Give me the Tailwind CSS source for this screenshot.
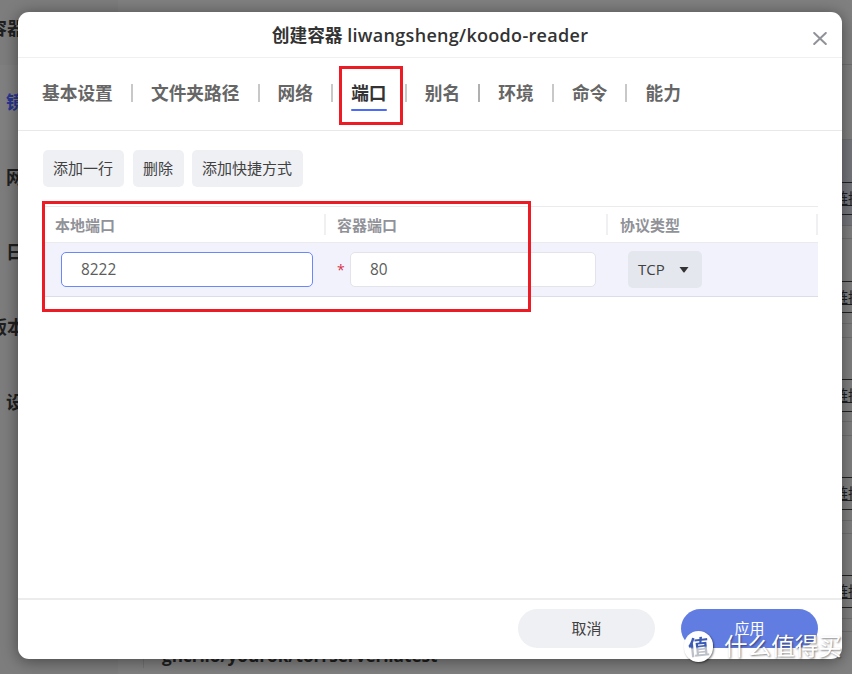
<!DOCTYPE html>
<html lang="zh-CN">
<head>
  <meta charset="UTF-8">
  <meta name="viewport" content="width=device-width, initial-scale=1.0">
  <title>创建容器</title>
  <script src="https://cdn.jsdelivr.net/npm/@tailwindcss/browser@4"></script>
</head>
<body class="relative w-[852px] h-[674px] overflow-hidden bg-[#808080] font-['Open_Sans','Noto_Sans_CJK_SC',sans-serif]">
  <!-- 背景页面 -->
  <div class="flex h-[674px] text-[#1f1f1f]">
    <nav class="w-[118px] shrink-0 bg-[#7d7d7d] text-[18px] font-bold whitespace-nowrap">
      <div class="h-[65px] pt-[10px] -ml-[11px] leading-9">容器</div>
      <div class="h-[75px] pl-[6px] leading-[75px] bg-[#808080] text-[#2a3590]">镜像</div>
      <div class="h-[75px] pl-[6px] leading-[75px]">网络</div>
      <div class="h-[75px] pl-[6px] leading-[75px]">日志</div>
      <div class="h-[75px] -ml-[11px] leading-[75px]">版本</div>
      <div class="h-[75px] pl-[6px] leading-[75px]">设置</div>
    </nav>
    <main class="flex flex-1 min-w-0">
      <div class="w-[26px] shrink-0 flex items-end justify-end">
        <div class="w-px h-[56px] mb-[6px] bg-[#747474]"></div>
      </div>
      <div class="flex-1 flex items-end pb-[6px] pl-[18px] text-[17.2px] leading-6 font-bold whitespace-nowrap">ghcr.io/yourok/torrserver:latest</div>
      <div class="w-[18px] shrink-0 text-[15px] whitespace-nowrap overflow-hidden pt-[64px]">
        <div class="h-[76px] border-y border-[#707070]"></div>
        <div class="h-[86px] pt-[42px] bg-[#75767d] border-b border-[#6c6c6c]">
          <div class="h-[33px] leading-[31px] border-y border-[#222]"><span class="-ml-[1px] underline">链接</span></div>
        </div>
        <div class="h-[98px] pt-[12px] border-b border-[#707070]">
          <div class="h-[43px] border-t border-[#707070]"></div>
          <div class="h-[32px] leading-[30px] border-y border-[#222]"><span class="-ml-[1px] underline">链接</span></div>
        </div>
        <div class="h-[98px] pt-[13px] border-b border-[#707070]">
          <div class="h-[42px] border-t border-[#707070]"></div>
          <div class="h-[33px] leading-[31px] border-y border-[#222]"><span class="-ml-[1px] underline">链接</span></div>
        </div>
        <div class="h-[99px] pt-[13px] border-b border-[#707070]">
          <div class="h-[42px] border-t border-[#707070]"></div>
          <div class="h-[33px] leading-[31px] border-y border-[#222]"><span class="-ml-[1px] underline">链接</span></div>
        </div>
        <div class="h-[98px] pt-[12px] border-b border-[#707070]">
          <div class="h-[42px] border-t border-[#707070]"></div>
          <div class="h-[33px] leading-[31px] border-y border-[#222]"><span class="-ml-[1px] underline">链接</span></div>
        </div>
        <div class="h-[13px] border-b border-[#707070]"></div>
      </div>
    </main>
  </div>

  <!-- 创建容器弹窗 -->
  <div class="absolute left-[18px] top-[12px] w-[824px] h-[647px] flex flex-col rounded-[11px] bg-white shadow-[0_2px_16px_rgba(0,0,0,0.45)]">
    <header class="flex h-[46px] shrink-0 items-center justify-center border-b border-[#f0f0f0]">
      <h1 class="pt-[2px] text-[18px] font-semibold text-[#333] whitespace-nowrap"><span class="text-[17.7px] font-bold">创建容器</span> <span class="tracking-[0.3px]">liwangsheng/koodo-reader</span></h1>
      <button class="absolute right-[15px] top-[20px]" aria-label="关闭">
        <svg class="w-[14px] h-[13px]" fill="none" stroke="#909298" stroke-width="2" stroke-linecap="round" viewBox="0 0 14 13">
          <path d="M1.2 1L12.8 12M12.8 1L1.2 12"/>
        </svg>
      </button>
    </header>

    <!-- 标签栏 -->
    <nav class="flex h-[73px] shrink-0 items-center gap-[18.1px] pl-[24px] pb-[2px] border-b border-[#e8e8ea] text-[17.7px] font-bold text-[#666] whitespace-nowrap">
      <span>基本设置</span>
      <i class="w-[2px] h-[18px] bg-[#c8c8c8]"></i>
      <span>文件夹路径</span>
      <i class="w-[2px] h-[18px] bg-[#c8c8c8]"></i>
      <span>网络</span>
      <i class="w-[2px] h-[18px] bg-[#c8c8c8]"></i>
      <span class="relative text-[#333]">端口<b class="absolute left-0 -bottom-[5px] w-full h-[2px] rounded bg-[#4b6bfb]"></b></span>
      <i class="w-[2px] h-[18px] bg-[#c8c8c8]"></i>
      <span>别名</span>
      <i class="w-[2px] h-[18px] bg-[#b0b0b0]"></i>
      <span>环境</span>
      <i class="w-[2px] h-[18px] bg-[#c8c8c8]"></i>
      <span>命令</span>
      <i class="w-[2px] h-[18px] bg-[#c8c8c8]"></i>
      <span>能力</span>
    </nav>

    <section class="flex-1 px-[25px] pt-[19px] text-[15px] text-[#414141]">
      <div class="flex whitespace-nowrap">
        <button class="w-[81px] h-[37px] pr-px rounded-[5px] bg-[#eff0f4]">添加一行</button>
        <button class="w-[51px] h-[37px] ml-[9px] pr-px rounded-[5px] bg-[#eff0f4]">删除</button>
        <button class="w-[111px] h-[37px] ml-[8px] pr-px rounded-[5px] bg-[#eff0f4]">添加快捷方式</button>
      </div>

      <!-- 端口表格 -->
      <div class="mt-[19px] w-[775px] border-t border-[#ebebed]">
        <div class="flex h-[36px] items-center border-b border-[#ebebed] font-bold text-[#909298]">
          <div class="flex items-center w-[283px] h-[21px] pt-[2px] pl-[12px] border-r-2 border-[#f0f0f2]">本地端口</div>
          <div class="flex items-center w-[282px] h-[21px] pt-[2px] pl-[11px] border-r-2 border-[#f0f0f2]">容器端口</div>
          <div class="flex items-center w-[210px] h-[21px] pt-[2px] pl-[12px] border-r-2 border-[#f0f0f2]">协议类型</div>
        </div>
        <div class="flex h-[54px] items-center bg-[#f1f2fb] border-b border-[#dcdee6] text-[#5c5c5c]">
          <div class="w-[282px] pl-[18px]">
            <div class="w-[252px] h-[35px] pl-[19px] text-[15.4px] leading-[33px] rounded-[5px] border border-[#6b87f8] bg-white">8222</div>
          </div>
          <div class="flex w-[282px] items-center pl-[12px]">
            <span class="w-[13px] text-[14px] text-[#d8344c]">*</span>
            <div class="w-[246px] h-[35px] pl-[19px] text-[15.4px] leading-[33px] rounded-[5px] border border-[#e2e4ea] bg-white">80</div>
          </div>
          <div class="pl-[21px]">
            <button class="flex w-[74px] h-[37px] items-center pl-[10px] pb-[1px] rounded-[5px] bg-[#e4e7ee] text-[#414141]">TCP
              <svg class="w-[10px] h-[6px] ml-[14px] mt-[2px]" viewBox="0 0 10 6" fill="#333"><path d="M0.5 0h9L5.6 5.2q-.6.6-1.2 0z"/></svg>
            </button>
          </div>
        </div>
      </div>
    </section>

    <footer class="flex h-[61px] shrink-0 justify-end gap-[26px] pt-[9px] pr-[24px] border-t-2 border-[#ececec] text-[15px]">
      <button class="w-[137px] h-[39px] rounded-full bg-[#eff0f4] text-[#414141]">取消</button>
      <button class="w-[137px] h-[39px] rounded-full bg-[#627de2] text-white">应用</button>
    </footer>
  </div>

  <!-- 标注框 -->
  <div class="absolute left-[339px] top-[66px] w-[64px] h-[59px] border-3 border-[#ed1c24]"></div>
  <div class="absolute left-[42px] top-[201px] w-[489px] h-[111px] border-3 border-[#ed1c24]"></div>

  <!-- 水印 -->
  <div class="absolute left-[684px] top-[631px] flex items-center gap-[11px] whitespace-nowrap font-['Noto_Sans_CJK_SC',sans-serif]">
    <div class="flex w-[29px] h-[31px] items-center justify-center rounded-full bg-white shadow-[1px_1px_2px_rgba(0,0,0,0.5)]">
      <span class="-rotate-6 text-[21px] leading-none font-bold text-transparent bg-clip-text bg-linear-to-b from-[#3c5cb4] from-50% to-[#bcc0c8] to-60%">值</span>
    </div>
    <span class="text-[23.6px] leading-[29px] pb-[2px] text-white [text-shadow:1px_1px_2px_rgba(0,0,0,0.5)]">什么值得买</span>
  </div>
</body>
</html>
